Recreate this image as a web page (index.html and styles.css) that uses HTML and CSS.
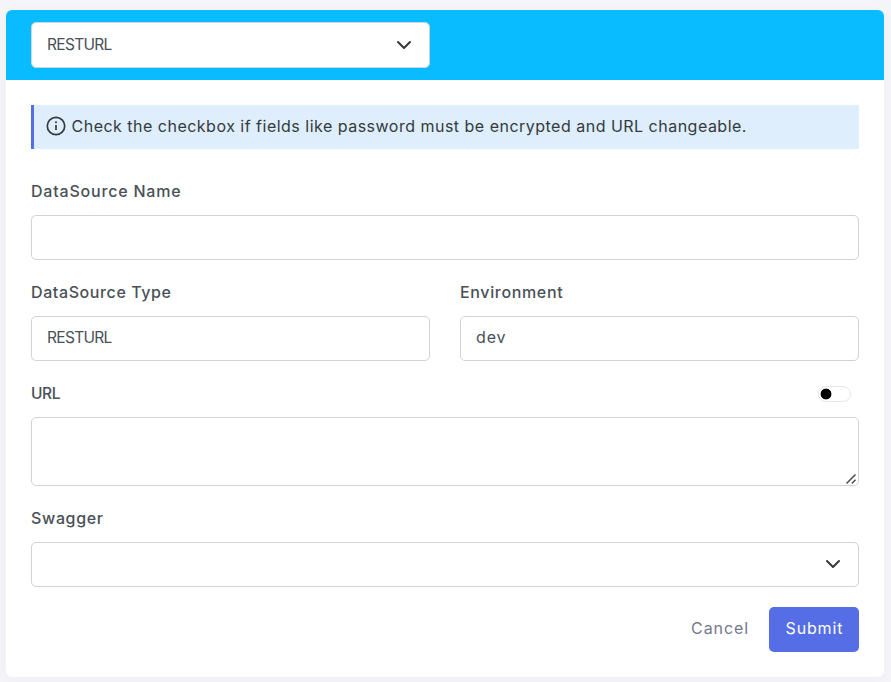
FILE: index.html
```html
<!DOCTYPE html>
<html lang="en">
<head>
<meta charset="utf-8">
<title>DataSource</title>
<link rel="stylesheet" href="styles.css">
</head>
<body>
<main class="card">
  <header class="card-header">
    <div class="control select header-select"><span class="t-rest">RESTURL</span>
      <svg class="chevron" viewBox="0 0 16 16"><path d="M2 5l6 6 6-6"/></svg>
    </div>
  </header>
  <form class="card-body">
    <div class="notice">
      <svg class="info" viewBox="0 0 20 20"><circle cx="10" cy="10" r="8.7"/><path d="M10 9v5"/><circle class="dot" cx="10" cy="6.3" r="1.05"/></svg>
      <span class="t-notice">Check the checkbox if fields like password must be encrypted and URL changeable.</span>
    </div>
    <div class="field">
      <label class="label"><span class="t-name">DataSource Name</span></label>
      <div class="control"></div>
    </div>
    <div class="row">
      <div class="field">
        <label class="label"><span class="t-type">DataSource Type</span></label>
        <div class="control"><span class="t-rest">RESTURL</span></div>
      </div>
      <div class="field">
        <label class="label"><span class="t-env">Environment</span></label>
        <div class="control"><span class="t-dev">dev</span></div>
      </div>
    </div>
    <div class="field">
      <div class="label split"><span class="t-url">URL</span><span class="switch"></span></div>
      <div class="area-wrap">
        <textarea class="control area" aria-label="URL"></textarea>
        <svg class="grip" viewBox="0 0 12 12"><path d="M1.5 10.5l9-9M6.8 10.5l3.7-3.7"/></svg>
      </div>
    </div>
    <div class="field">
      <label class="label"><span class="t-swagger">Swagger</span></label>
      <div class="control select"><span></span>
        <svg class="chevron" viewBox="0 0 16 16"><path d="M2 5l6 6 6-6"/></svg>
      </div>
    </div>
    <div class="actions">
      <a class="cancel"><span class="t-cancel">Cancel</span></a>
      <button type="button" class="submit"><span class="t-submit">Submit</span></button>
    </div>
  </form>
</main>
</body>
</html>
```
FILE: styles.css
```css
* { box-sizing: border-box; }
body {
  margin: 0;
  padding: 10px 7px 5px 6px;
  height: 682px;
  overflow: hidden;
  background: #f5f5f9;
  font: 400 16px/24px Inter, "Open Sans", sans-serif;
  color: #495057;
}
.card {
  height: 667px;
  border-radius: 6px;
  background: #fff;
  box-shadow: 0 3px 14px rgba(18, 38, 63, .03);
}
.card-header {
  height: 70px;
  padding: 12px 25px;
  border-radius: 6px 6px 0 0;
  background: #08bcff;
}
.card-body { padding: 25px; }
.control {
  display: flex;
  align-items: center;
  width: 100%;
  height: 45px;
  padding: 0 15px 1px;
  border: 1px solid #ced4da;
  border-radius: 5px;
  background: #fff;
}
.header-select { width: 399px; height: 46px; padding-bottom: 0; }
.select { justify-content: space-between; padding-right: 17px; }
.chevron {
  width: 16px;
  height: 16px;
  fill: none;
  stroke: #343a40;
  stroke-width: 2;
  stroke-linecap: round;
  stroke-linejoin: round;
}
.notice {
  display: flex;
  align-items: center;
  gap: 6px;
  height: 44px;
  margin-bottom: 30px;
  padding: 0 0 2px 11.5px;
  border-left: 3px solid #556ee6;
  background: #deeefc;
  color: #343a40;
  white-space: nowrap;
}
.info {
  width: 20px;
  height: 20px;
  fill: none;
  stroke: #343a40;
  stroke-width: 1.7;
}
.dot { fill: #343a40; stroke: none; }
.field { margin-bottom: 20px; }
.row { display: grid; grid-template-columns: 399px 399px; gap: 30px; }
.label {
  display: block;
  height: 24px;
  margin-bottom: 12px;
  font-weight: 500;
}
.split { display: flex; justify-content: space-between; padding: 1px 8px 0 0; }
.switch {
  width: 33px;
  height: 16px;
  margin-top: 4px;
  border: 1px solid #e5e7eb;
  border-radius: 8px;
  background: radial-gradient(circle at 7px 7px, #000 5px, transparent 5.8px);
}
.area-wrap { position: relative; }
.area { display: block; height: 69px; resize: none; }
.grip {
  position: absolute;
  right: 2px;
  bottom: 1px;
  width: 12px;
  height: 12px;
  fill: none;
  stroke: #4b4b4b;
  stroke-width: 1.5;
}
.actions { display: flex; justify-content: flex-end; gap: 20px; }
.cancel { padding-top: 9px; color: #74788d; }
.submit {
  width: 90px;
  height: 45px;
  padding: 0 0 3px;
  border: 0;
  border-radius: 5px;
  background: #556ee6;
  color: #fff;
  font: inherit;
}
.t-notice { letter-spacing: .49px; }
.t-name { letter-spacing: .8px; }
.t-type { letter-spacing: .6px; }
.t-env, .t-swagger { letter-spacing: .65px; }
.t-dev { margin-bottom: 2px; letter-spacing: .9px; }
.t-rest { font-size: 15.5px; letter-spacing: -.7px; }
.t-url { font-size: 15.5px; letter-spacing: -.4px; }
.t-cancel { letter-spacing: .95px; margin-right: -.2px; }
.t-submit { letter-spacing: .85px; margin-right: -.85px; }
```
